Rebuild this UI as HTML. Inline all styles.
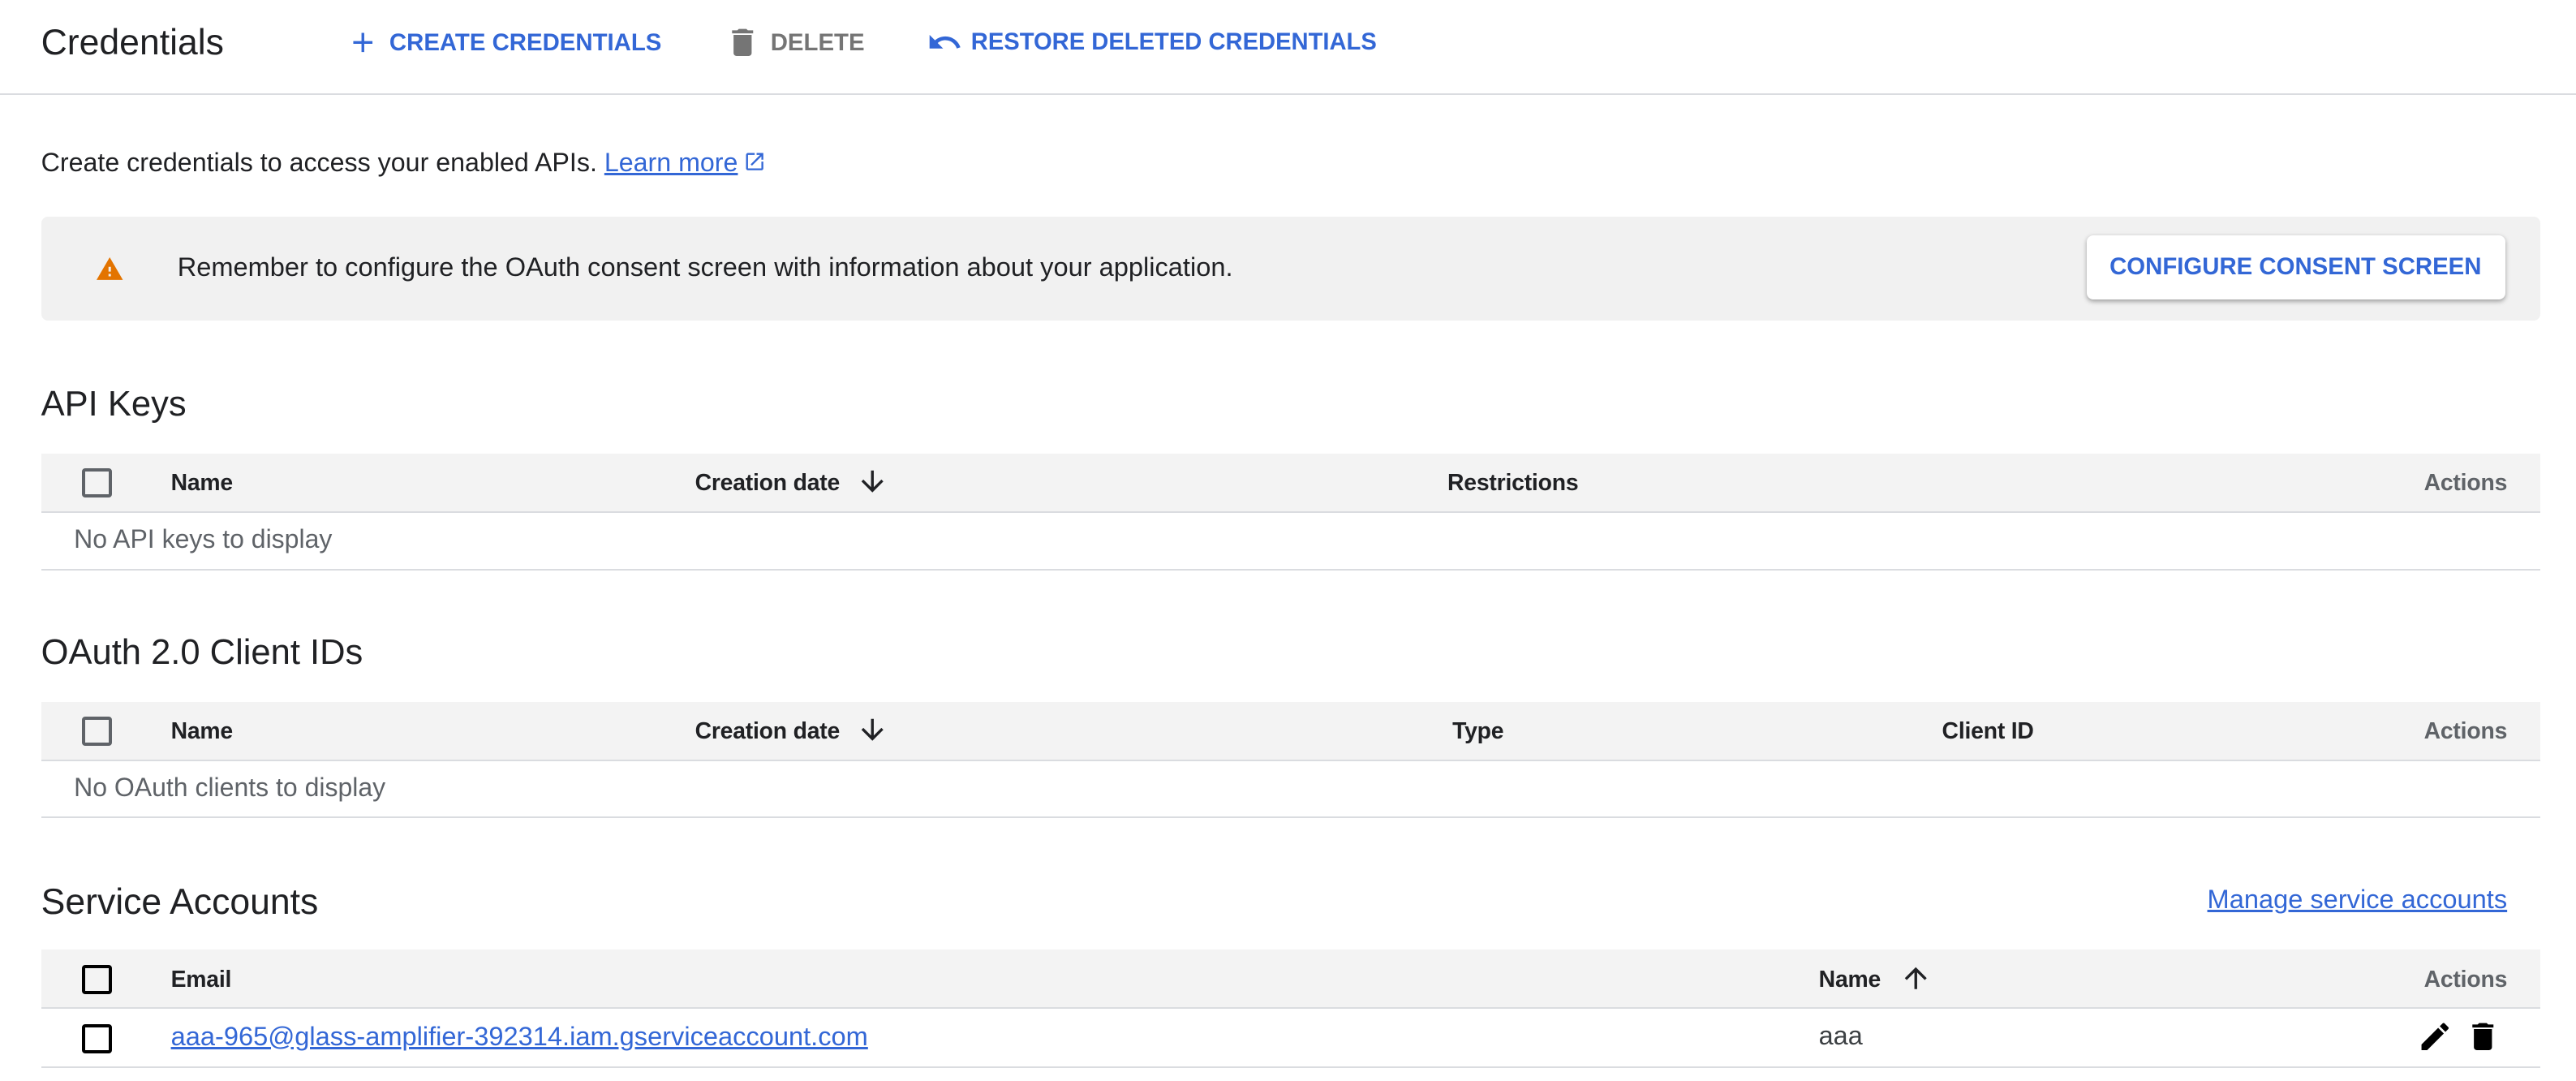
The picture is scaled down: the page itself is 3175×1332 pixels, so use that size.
<!DOCTYPE html>
<html><head><meta charset="utf-8"><style>
html,body{margin:0;padding:0;background:#fff;width:3175px;height:1332px;overflow:hidden}
#w{zoom:2.025;width:1568px;height:658px;position:relative;font-family:"Liberation Sans",Arial,sans-serif;color:#202124}
.a{position:absolute;white-space:nowrap}
.hdr{left:0;top:0;width:1568px;height:57px;border-bottom:1px solid #dadce0}
.btn{font-size:14.5px;font-weight:bold;color:#3367d6;letter-spacing:0}
.h2{font-size:21.5px;left:25px}
.th{position:absolute;left:25px;width:1521px;height:35px;background:#f3f3f3;border-bottom:1px solid #dadce0}
.tr{position:absolute;left:25px;width:1521px;height:35px;border-bottom:1px solid #dadce0}
.cb{position:absolute;left:25px;top:9px;width:14px;height:14px;border:2px solid #5f6368;border-radius:2px}
.t{font-size:14px;font-weight:bold;position:absolute;top:10px;letter-spacing:-0.1px}
.act{right:20px;color:#5f6368;font-weight:bold}
.g{color:#5f6368;font-size:15.8px}
a{color:#3367d6}
</style></head><body><div id="w">
<div class="a hdr"></div>
<div class="a" style="left:25px;top:14px;font-size:22px">Credentials</div>
<svg class="a" style="left:211px;top:16px" width="20" height="20" viewBox="0 0 24 24"><path d="M19 13h-6v6h-2v-6H5v-2h6V5h2v6h6v2z" fill="#3367d6"/></svg>
<div class="a btn" style="left:237px;top:18px">CREATE CREDENTIALS</div>
<svg class="a" style="left:441px;top:15px" width="22" height="22" viewBox="0 0 24 24"><path d="M6 19c0 1.1.9 2 2 2h8c1.1 0 2-.9 2-2V7H6v12zM19 4h-3.5l-1-1h-5l-1 1H5v2h14V4z" fill="#757575"/></svg>
<div class="a btn" style="left:469px;top:18px;color:#757575">DELETE</div>
<svg class="a" style="left:564px;top:15px" width="22" height="22" viewBox="0 0 24 24"><path d="M12.5 8c-2.65 0-5.05.99-6.9 2.6L2 7v9h9l-3.62-3.62c1.39-1.16 3.160-1.88 5.12-1.88 3.54 0 6.55 2.31 7.6 5.5l2.37-.78C21.08 11.03 17.15 8 12.5 8z" fill="#3367d6"/></svg>
<div class="a btn" style="left:591px;top:18px;font-size:14.4px">RESTORE DELETED CREDENTIALS</div>

<div class="a" style="left:25px;top:90px;font-size:15.9px">Create credentials to access your enabled APIs. <a href="#">Learn more</a><svg width="14" height="14" viewBox="0 0 24 24" style="vertical-align:-1px;margin-left:3px"><path d="M19 19H5V5h7V3H5a2 2 0 0 0-2 2v14a2 2 0 0 0 2 2h14c1.1 0 2-.9 2-2v-7h-2v7zM14 3v2h3.59l-9.83 9.83 1.41 1.41L19 6.41V10h2V3h-7z" fill="#3367d6"/></svg></div>

<div class="a" style="left:25px;top:132px;width:1521px;height:63px;background:#f1f1f1;border-radius:4px"></div>
<svg class="a" style="left:58px;top:155px" width="18" height="16" viewBox="0 0 24 22"><path d="M1 21h22L12 2 1 21zm12-3h-2v-2h2v2zm0-4h-2v-4h2v4z" fill="#e37400"/></svg>
<div class="a" style="left:108px;top:153px;font-size:16.1px">Remember to configure the OAuth consent screen with information about your application.</div>
<div class="a" style="left:1270px;top:143px;width:255px;height:39px;background:#fff;border-radius:4px;box-shadow:0 1px 3px rgba(0,0,0,.35)"></div>
<div class="a btn" style="left:1284px;top:154px;font-size:14.5px">CONFIGURE CONSENT SCREEN</div>

<div class="a h2" style="top:234px">API Keys</div>
<div class="th" style="top:276px"><div class="cb"></div><div class="t" style="left:79px">Name</div><div class="t" style="left:398px">Creation date</div>
<svg style="position:absolute;left:496px;top:7px" width="20" height="20" viewBox="0 0 24 24"><path d="M20 12l-1.41-1.41L13 16.17V4h-2v12.17l-5.58-5.59L4 12l8 8 8-8z" fill="#202124"/></svg>
<div class="t" style="left:856px">Restrictions</div><div class="t act">Actions</div></div>
<div class="tr" style="top:311px"><div class="a g" style="left:20px;top:8px">No API keys to display</div></div>

<div class="a h2" style="top:385px">OAuth 2.0 Client IDs</div>
<div class="th" style="top:427px"><div class="cb"></div><div class="t" style="left:79px">Name</div><div class="t" style="left:398px">Creation date</div>
<svg style="position:absolute;left:496px;top:7px" width="20" height="20" viewBox="0 0 24 24"><path d="M20 12l-1.41-1.41L13 16.17V4h-2v12.17l-5.58-5.59L4 12l8 8 8-8z" fill="#202124"/></svg>
<div class="t" style="left:859px">Type</div><div class="t" style="left:1157px">Client ID</div><div class="t act">Actions</div></div>
<div class="tr" style="top:462px"><div class="a g" style="left:20px;top:8px">No OAuth clients to display</div></div>

<div class="a h2" style="top:537px;font-size:22px">Service Accounts</div>
<div class="a" style="right:42px;top:538px;font-size:16.1px"><a href="#">Manage service accounts</a></div>
<div class="th" style="top:578px"><div class="cb" style="border-color:#000"></div><div class="t" style="left:79px">Email</div><div class="t" style="left:1082px">Name</div>
<svg style="position:absolute;left:1131px;top:7px" width="20" height="20" viewBox="0 0 24 24"><path d="M4 12l1.41 1.41L11 7.83V20h2V7.83l5.58 5.59L20 12l-8-8-8 8z" fill="#202124"/></svg>
<div class="t act">Actions</div></div>
<div class="tr" style="top:613px;height:36px"><div class="cb" style="border-color:#000;top:10px"></div>
<div class="a" style="left:79px;top:8px;font-size:16.1px"><a href="#">aaa-965@glass-amplifier-392314.iam.gserviceaccount.com</a></div>
<div class="a" style="left:1082px;top:8px;font-size:16px;color:#3c4043">aaa</div>
<svg style="position:absolute;left:1446px;top:7px" width="22" height="22" viewBox="0 0 24 24"><path d="M3 17.25V21h3.75L17.81 9.94l-3.75-3.75L3 17.25zM20.71 7.04a1 1 0 0 0 0-1.41l-2.340-2.34a1 1 0 0 0-1.41 0l-1.83 1.83 3.75 3.75 1.83-1.83z" fill="#000"/></svg>
<svg style="position:absolute;left:1475px;top:7px" width="22" height="22" viewBox="0 0 24 24"><path d="M6 19c0 1.1.9 2 2 2h8c1.1 0 2-.9 2-2V7H6v12zM19 4h-3.5l-1-1h-5l-1 1H5v2h14V4z" fill="#000"/></svg>
</div>
</div></body></html>
